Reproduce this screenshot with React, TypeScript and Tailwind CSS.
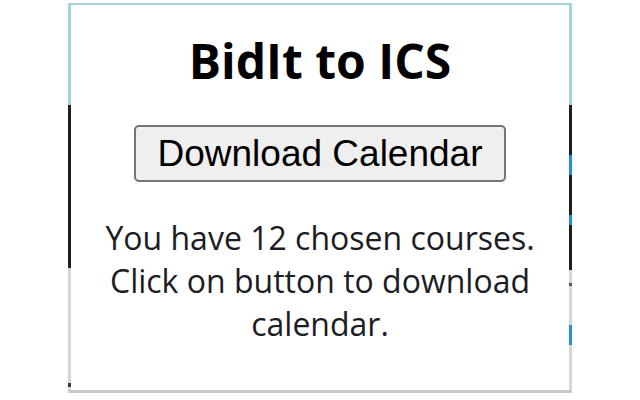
import {ReactElement} from "react";

// Edge of the page that shows behind the popup, one side at a time
const LeftEdge = (): ReactElement => (
    <div className="flex flex-col w-[3px]">
        <div className="h-[100px] bg-[#a6d2d6]"/>
        <div className="h-[163px] bg-[#1f1f1f]"/>
        <div className="h-[115px] bg-[#d6d6d6]"/>
        <div className="h-[4px] bg-[#3a3a3a]"/>
        <div className="flex-1 bg-[#d6d6d6]"/>
    </div>
);

const RightEdge = (): ReactElement => (
    <div className="flex flex-col w-[3px]">
        <div className="h-[100px] bg-[#a6d2d6]"/>
        <div className="h-[50px] bg-[#1f1f1f]"/>
        <div className="h-[20px] bg-[#1d8fdc]"/>
        <div className="h-[40px] bg-[#1f1f1f]"/>
        <div className="h-[10px] bg-[#1d8fdc]"/>
        <div className="h-[45px] bg-[#1f1f1f]"/>
        <div className="h-[13px] bg-[#d6d6d6]"/>
        <div className="h-[3px] bg-[#555]"/>
        <div className="h-[39px] bg-[#d6d6d6]"/>
        <div className="h-[20px] bg-[#2b8fd6]"/>
        <div className="flex-1 bg-[#d6d6d6]"/>
    </div>
);

const App = (): ReactElement => {
    const chosenCourses = 12;
    const message = `You have ${chosenCourses} chosen courses. Click on button to download calendar.`;

    return (
        <div className="w-[640px] h-[400px] bg-white overflow-hidden pt-[3px] pl-[68px]">
            <div className="w-[504px] flex flex-col">
                <div className="h-[2px] bg-[#a6d2d6]"/>
                <div className="flex flex-row h-[385px]">
                    <LeftEdge/>
                    {/* Popup */}
                    <div className="flex-1 bg-white flex flex-col items-center pt-[28px]">
                        <h1 className="text-[48px] leading-[56px] font-bold text-black font-['Open_Sans',sans-serif]">
                            BidIt to ICS
                        </h1>
                        <button
                            className="mt-[36px] h-[57px] px-[22px] flex items-center justify-center bg-[#efefef] border-2 border-[#767676] rounded-[5px] text-[37px] text-black font-['Liberation_Sans',Arial,sans-serif]"
                        >
                            Download Calendar
                        </button>
                        <p className="mt-[34px] w-[460px] text-center text-[32px] leading-[43px] text-[#1c1c24] font-['Open_Sans',sans-serif]">
                            {message}
                        </p>
                    </div>
                    <RightEdge/>
                </div>
                <div className="h-[3px] bg-[#c9c9c9]"/>
            </div>
        </div>
    );
}

export default App;
